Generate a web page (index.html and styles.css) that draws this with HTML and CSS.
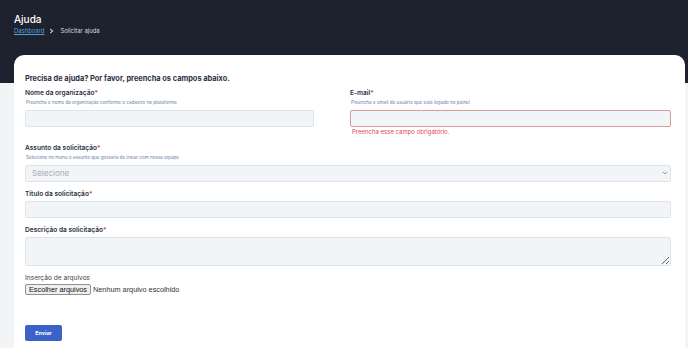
FILE: index.html
```html
<!DOCTYPE html>
<html lang="pt-BR">
<head>
<meta charset="utf-8">
<title>Ajuda</title>
<link rel="stylesheet" href="styles.css">
</head>
<body>
<header class="top">
  <h1 class="top-title">Ajuda</h1>
  <nav class="crumbs">
    <a href="#" class="crumb-link">Dashboard</a>
    <svg class="crumb-sep" width="5" height="6" viewBox="0 0 5 6"><path d="M1.2 0.8 L3.6 3 L1.2 5.2" fill="none" stroke="#c9ccd4" stroke-width="1.1"/></svg>
    <span class="crumb-current">Solicitar ajuda</span>
  </nav>
</header>
<main class="card">
  <h2 class="card-title">Precisa de ajuda? Por favor, preencha os campos abaixo.</h2>
  <form class="form">
    <div class="row two">
      <div class="field">
        <label class="label">Nome da organização<span class="req">*</span></label>
        <p class="help">Preencha o nome da organização conforme o cadastro na plataforma</p>
        <input class="control short" type="text">
      </div>
      <div class="field">
        <label class="label">E-mail<span class="req">*</span></label>
        <p class="help">Preencha o email do usuário que está logado no painel</p>
        <input class="control invalid" type="email">
        <p class="error">Preencha esse campo obrigatório.</p>
      </div>
    </div>
    <div class="field">
      <label class="label">Assunto da solicitação<span class="req">*</span></label>
      <p class="help">Selecione no menu o assunto que gostaria de tratar com nossa equipe</p>
      <div class="select-wrap">
        <select class="control select"><option>Selecione</option></select>
        <svg class="chev" width="6" height="4" viewBox="0 0 6 4"><path d="M0.8 0.8 L3 3 L5.2 0.8" fill="none" stroke="#8a919c" stroke-width="0.9"/></svg>
      </div>
    </div>
    <div class="field">
      <label class="label">Título da solicitação<span class="req">*</span></label>
      <input class="control" type="text">
    </div>
    <div class="field">
      <label class="label">Descrição da solicitação<span class="req">*</span></label>
      <textarea class="control area"></textarea>
    </div>
    <div class="field files">
      <label class="label light">Inserção de arquivos</label>
      <div class="file">
        <button type="button" class="file-btn">Escolher arquivos</button>
        <span class="file-text">Nenhum arquivo escolhido</span>
      </div>
    </div>
    <button type="button" class="submit">Enviar</button>
  </form>
</main>
</body>
</html>
```
FILE: styles.css
```css
* { box-sizing: border-box; }
html, body { margin: 0; }
body {
  font-family: Inter, "Noto Sans", sans-serif;
  background: linear-gradient(#1e222e 0, #1e222e 83px, #f3f4f6 83px);
  min-height: 348px;
}
.top {
  padding: 13px 14px 0;
  height: 55px;
}
.top-title {
  margin: 0;
  font-size: 10px;
  line-height: 13px;
  font-weight: 500;
  color: #ffffff;
}
.crumbs {
  display: flex;
  align-items: center;
  gap: 4px;
  margin-top: 0;
  font-size: 5.9px;
  line-height: 9px;
}
.crumb-link { color: #4fa3d8; text-decoration: underline; }
.crumb-sep { margin: 0 2px 0 1px; }
.crumb-current { color: #d7dae0; }
.card {
  margin: 0 3px 0 14px;
  background: #ffffff;
  border-radius: 10px 10px 0 0;
  padding: 18px 14px 10px 11px;
  min-height: 300px;
}
.card-title {
  margin: 0 0 4px;
  font-size: 7.4px;
  line-height: 12px;
  font-weight: 700;
  color: #2b3142;
}
.form { display: flex; flex-direction: column; }
.row.two {
  display: grid;
  grid-template-columns: 1fr 1fr;
  column-gap: 0;
}
.row.two .field:last-child { padding-left: 2px; }
.field { display: flex; flex-direction: column; margin-bottom: 8.5px; }
.label {
  font-size: 6.6px;
  line-height: 9px;
  font-weight: 600;
  color: #2b3142;
  margin-bottom: 1.5px;
}
.req { color: #e0363c; }
.help {
  margin: -0.5px 0 3.5px 1px;
  font-size: 4.6px;
  line-height: 7px;
  color: #6e7ea6;
}
.control {
  display: block;
  width: 100%;
  height: 17px;
  margin: 0;
  border: 1px solid #dfe4eb;
  border-radius: 2px;
  background: #f2f5f8;
  font-family: inherit;
  font-size: 8px;
  padding: 0 6px;
  outline: none;
}
.control.short { width: 289px; }
.control.invalid { border-color: #d99a9a; }
.error {
  margin: 0;
  padding-left: 2px;
  font-size: 6px;
  line-height: 9px;
  color: #e0474c;
}
.select-wrap { position: relative; }
.select {
  appearance: none;
  -webkit-appearance: none;
  color: #a8adb5;
  font-size: 8px;
}
.chev { position: absolute; right: 3px; top: 6.5px; }
.area { height: 29px; resize: vertical; padding: 4px 6px; }
.label.light { font-weight: 400; color: #3a3f4a; margin-bottom: 0.5px; }
.file { display: flex; align-items: center; gap: 2px; }
.file-btn {
  font-family: "Liberation Sans", Arial, sans-serif;
  font-size: 7.3px;
  line-height: 9px;
  height: 11px;
  padding: 0 3px;
  margin: 0;
  background: #efefef;
  border: 1px solid #8f8f8f;
  border-radius: 2px;
  color: #111;
}
.file-text {
  font-family: "Liberation Sans", Arial, sans-serif;
  font-size: 7.3px;
  color: #333;
}
.submit {
  align-self: flex-start;
  margin-top: 22px;
  width: 37px;
  height: 16px;
  border: 0;
  border-radius: 2px;
  background: #3a62c8;
  color: #fff;
  font-family: inherit;
  font-size: 5.4px;
  font-weight: 700;
  padding: 0;
}
```
